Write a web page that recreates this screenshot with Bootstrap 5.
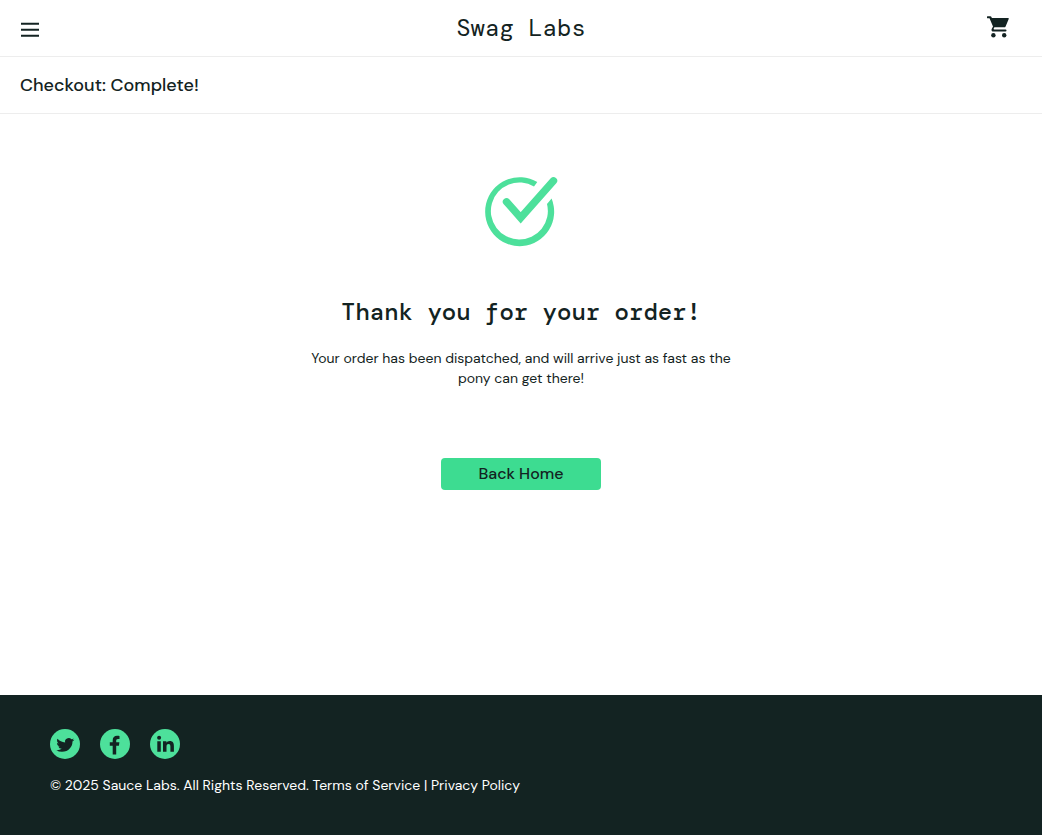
<!DOCTYPE html>
<html lang="en">
<head>
<meta charset="utf-8">
<meta name="viewport" content="width=device-width, initial-scale=1">
<title>Swag Labs</title>
<link href="https://cdn.jsdelivr.net/npm/bootstrap@5.3.0/dist/css/bootstrap.min.css" rel="stylesheet">
<style>
  body { color: #132322; font-family: "DM Sans", "Open Sans", sans-serif; font-size: 14px; line-height: 20px; }
  .bar { min-height: 57px; border-bottom: 1px solid #ededed; padding: 0 20px; }
  .bar-side { width: 40px; }
  .menu-btn { padding: 2px 0 0; }
  .brand { font: 400 24px/36px "DM Mono", "Liberation Mono", monospace; color: inherit; }
  .cart-link { padding: 0 13px 2px 0; }
  .page-title { font: 500 18px/24px "DM Sans", "Inter", sans-serif; }
  .done-mark { margin-top: 62px; }
  .thanks { font: 500 24px/32px "DM Mono", "Liberation Mono", monospace; margin: 49px 0 20px; }
  .note { max-width: 440px; }
  .back-home { width: 160px; height: 32px; margin-top: 70px; font: 500 16px/32px "DM Sans", "Inter", sans-serif; border-radius: 4px; }
  .back-home, .back-home:hover { background: #3ddc91; color: #132322; }
  .site-footer { background: #132322; padding: 34px 50px 40px; min-height: 140px; }
  .social { gap: 20px; }
  .copy { margin-top: 16px; }
</style>
</head>
<body class="bg-white d-flex flex-column min-vh-100">
<header>
  <div class="bar d-flex align-items-center justify-content-between">
    <div class="bar-side">
      <button class="btn menu-btn border-0" type="button" aria-label="Open Menu">
        <svg class="d-block" width="20" height="16" viewBox="0 0 20 16" fill="#132322"><path d="M1 .8h18v2H1zM1 6.800h18v2H1zM1 12.800h18v2H1z"/></svg>
      </button>
    </div>
    <a class="brand text-decoration-none" href="#">Swag Labs</a>
    <a class="bar-side cart-link d-flex justify-content-end" href="#" aria-label="Shopping cart">
      <svg class="flex-shrink-0" width="22" height="22" viewBox="0 0 22 22" fill="#132322"><path d="M.7.2H3.400Q4 .2 4.300.8L4.900 2H21Q22.200 2 21.700 3.100L18.600 10.400Q18.200 11.300 17.200 11.300H7.400L6.700 12.600Q6.400 13.500 7.200 13.500H18.500Q19.500 13.500 19.500 14.500T18.500 15.600H6.200C4.600 15.600 4.200 14.300 4.700 13.100L6 10.500 2.500 2.300H.7A1 1 0 0 1 .7.2Z"/><circle cx="6.400" cy="19.300" r="2.200"/><circle cx="17.200" cy="19.300" r="2.200"/></svg>
    </a>
  </div>
  <div class="bar d-flex align-items-center"><h1 class="page-title mb-0">Checkout: Complete!</h1></div>
</header>
<main class="flex-grow-1 d-flex flex-column align-items-center text-center">
  <svg class="done-mark" width="74" height="71" viewBox="484 176 74 71" aria-hidden="true"><path fill="#4de09b" d="M537.3 182A34.5 34.5 0 1 0 551.6 198.6L547 204A28.5 28.5 0 1 1 534 186.5Z"/><path d="M506.500 201.800L520.700 217.800L553.500 180.800" fill="none" stroke="#4de09b" stroke-width="7.400" stroke-linecap="round"/></svg>
  <h2 class="thanks">Thank you for your order!</h2>
  <p class="note mb-0">Your order has been dispatched, and will arrive just as fast as the pony can get there!</p>
  <button class="btn back-home border-0 p-0" type="button">Back Home</button>
</main>
<footer class="site-footer text-white">
  <ul class="list-unstyled d-flex social mb-0">
    <li><a class="d-block" href="#" aria-label="Twitter"><svg class="d-block" width="30" height="30" viewBox="0 0 30 30"><circle cx="15" cy="15" r="15" fill="#4de09b"/><path transform="translate(6.300 7.600) scale(.75 .7)" fill="#132322" d="M23.950 4.570a10 10 0 0 1-2.820.77 4.960 4.960 0 0 0 2.160-2.720c-.95.550-2 .950-3.130 1.180a4.920 4.920 0 0 0-8.380 4.480C7.690 8.100 4.070 6.130 1.640 3.160a4.820 4.820 0 0 0-.67 2.480c0 1.710.87 3.210 2.190 4.100a4.900 4.900 0 0 1-2.230-.62v.06a4.920 4.920 0 0 0 3.950 4.830 5 5 0 0 1-2.210.08 4.940 4.940 0 0 0 4.600 3.420A9.870 9.870 0 0 1 0 19.540a14 14 0 0 0 7.550 2.210c9.050 0 14-7.500 14-13.980 0-.21 0-.42-.02-.63a9.940 9.940 0 0 0 2.420-2.570z"/></svg></a></li>
    <li><a class="d-block" href="#" aria-label="Facebook"><svg class="d-block" width="30" height="30" viewBox="0 0 30 30"><circle cx="15" cy="15" r="15" fill="#4de09b"/><path fill="#132322" d="M12.700 25.500V16.800H9.800V13.200H12.700V11.300C12.700 8.400 14.400 6.800 17 6.800C18.200 6.800 19.500 7 19.500 7V10.100H18C16.600 10.100 16.200 10.900 16.200 11.800V13.200H19.400L18.900 16.800H16.200V25.500Z"/></svg></a></li>
    <li><a class="d-block" href="#" aria-label="LinkedIn"><svg class="d-block" width="30" height="30" viewBox="0 0 30 30"><circle cx="15" cy="15" r="15" fill="#4de09b"/><g fill="#132322"><circle cx="9.100" cy="8.800" r="2"/><path d="M7.300 12.300h3.500v10.500H7.300zM13 12.300h3.400v1.500c.6-1 1.700-1.800 3.300-1.800 3.400 0 4.200 2.200 4.200 5.100v5.700h-3.500v-5.100c0-1.400-.2-2.800-1.900-2.800s-2 1.400-2 2.800v5.100H13z"/></g></svg></a></li>
  </ul>
  <p class="copy mb-0">© 2025 Sauce Labs. All Rights Reserved. Terms of Service | Privacy Policy</p>
</footer>
<script src="https://cdn.jsdelivr.net/npm/bootstrap@5.3.0/dist/js/bootstrap.bundle.min.js"></script>
</body>
</html>
